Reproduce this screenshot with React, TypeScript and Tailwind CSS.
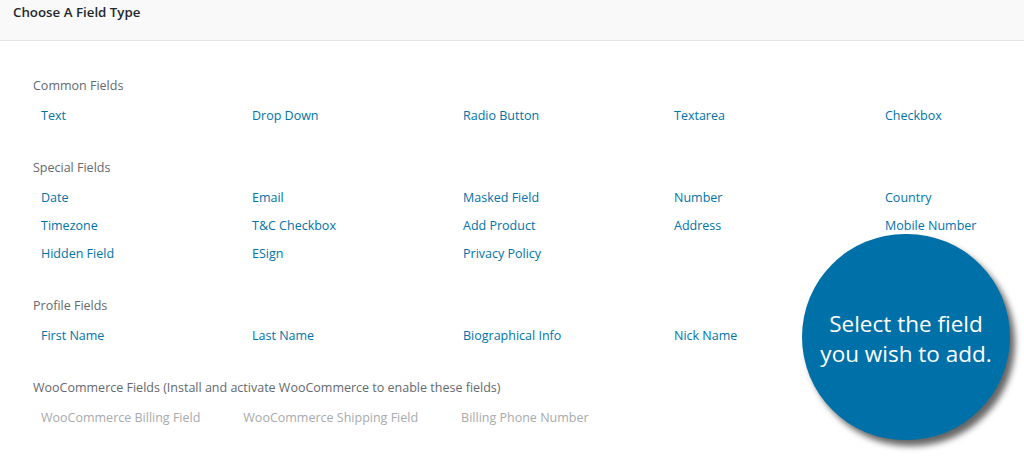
const common = ["Text", "Drop Down", "Radio Button", "Textarea", "Checkbox"];
const special = [
    "Date",
    "Email",
    "Masked Field",
    "Number",
    "Country",
    "Timezone",
    "T&C Checkbox",
    "Add Product",
    "Address",
    "Mobile Number",
    "Hidden Field",
    "ESign",
    "Privacy Policy",
];
const profile = ["First Name", "Last Name", "Biographical Info", "Nick Name"];
const woo = ["WooCommerce Billing Field", "WooCommerce Shipping Field", "Billing Phone Number"];

const FieldGroup = ({ title, items }: { title: string; items: string[] }) => (
    <div className="mb-[32px]">
        <div className="text-[#646970] h-[20px] leading-[20px] mb-[10px]">{title}</div>
        <div className="grid grid-cols-[repeat(5,211px)] gap-y-[8px]">
            {items.map((item) => (
                <div key={item} className="pl-[8px] h-[20px] leading-[20px] text-[#0073aa] whitespace-nowrap">
                    {item}
                </div>
            ))}
        </div>
    </div>
);

export default function App() {
    return (
        <div
            className="relative w-[1024px] h-[456px] overflow-hidden bg-white text-[12.5px]"
            style={{ fontFamily: '"Open Sans", "Noto Sans", sans-serif' }}
        >
            <div className="h-[41px] bg-[#f9f9f9] border-b border-[#e2e2e2] px-[13px] pt-[2px]">
                <h1 className="text-[13.3px] font-semibold text-[#23282d] leading-[20px]">Choose A Field Type</h1>
            </div>

            <div className="pl-[33px] pt-[35px]">
                <FieldGroup title="Common Fields" items={common} />
                <FieldGroup title="Special Fields" items={special} />
                <FieldGroup title="Profile Fields" items={profile} />
                <div>
                    <div className="text-[#646970] h-[20px] leading-[20px] mb-[10px]">
                        WooCommerce Fields (Install and activate WooCommerce to enable these fields)
                    </div>
                    <div className="flex gap-[43px] pl-[8px] text-[#a7aaad] h-[20px] leading-[20px]">
                        {woo.map((item) => (
                            <span key={item}>{item}</span>
                        ))}
                    </div>
                </div>
            </div>

            <div className="absolute left-[802px] top-[234px] w-[208px] h-[206px] rounded-full bg-[#0070a8] shadow-[5px_6px_6px_rgba(0,0,0,0.6)] flex items-center justify-center">
                <p className="text-white text-[22.5px] leading-[30px] text-center pt-[4px]">
                    Select the field
                    <br />
                    you wish to add.
                </p>
            </div>
        </div>
    );
}
